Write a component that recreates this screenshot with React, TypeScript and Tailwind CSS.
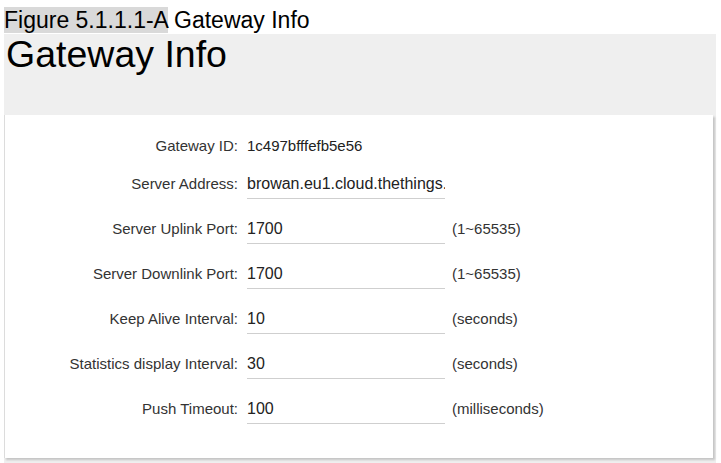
import React from 'react'

const rows = [
  { label: 'Server Address:', value: 'browan.eu1.cloud.thethings.network', unit: '' },
  { label: 'Server Uplink Port:', value: '1700', unit: '(1~65535)' },
  { label: 'Server Downlink Port:', value: '1700', unit: '(1~65535)' },
  { label: 'Keep Alive Interval:', value: '10', unit: '(seconds)' },
  { label: 'Statistics display Interval:', value: '30', unit: '(seconds)' },
  { label: 'Push Timeout:', value: '100', unit: '(milliseconds)' },
]

export default function App() {
  return (
    <div className="w-[721px] h-[463px] overflow-hidden bg-white font-['Liberation_Sans',Arial,sans-serif] text-[#222]">
      {/* caption */}
      <div className="pl-[4px] pt-[8px] h-[34px] text-[23px] leading-[25px] text-black whitespace-nowrap">
        <span className="bg-[#d9d9d9]">Figure 5.1.1.1-A</span> Gateway Info
      </div>

      <div className="ml-[4px] w-[712px] h-[429px] bg-[#efefef]">
        <div className="h-[81px] pl-[2px] text-[37.5px] leading-[40px] text-black">Gateway Info</div>

        <div className="w-[709px] h-[343px] bg-white border-l border-[#dcdcdc] shadow-[2px_2px_2px_rgba(0,0,0,0.18)] pt-[19px]">
          <div className="flex items-center h-[24px]">
            <div className="w-[233px] text-right text-[15px] text-[#333]">Gateway ID:</div>
            <div className="ml-[9px] text-[15px] text-[#222]">1c497bfffefb5e56</div>
          </div>

          <div className="mt-[11px] flex flex-col gap-[15px]">
            {rows.map((r) => (
              <div key={r.label} className="flex items-center h-[30px]">
                <div className="w-[233px] text-right text-[15px] text-[#333] whitespace-nowrap">{r.label}</div>
                <input
                  readOnly
                  value={r.value}
                  className="ml-[9px] w-[198px] h-[30px] p-0 border-0 border-b border-[#cfcfcf] bg-transparent outline-none text-[16px] text-[#222] font-['Liberation_Sans',Arial,sans-serif]"
                />
                <div className="ml-[7px] text-[15px] text-[#333]">{r.unit}</div>
              </div>
            ))}
          </div>
        </div>
      </div>
    </div>
  )
}
